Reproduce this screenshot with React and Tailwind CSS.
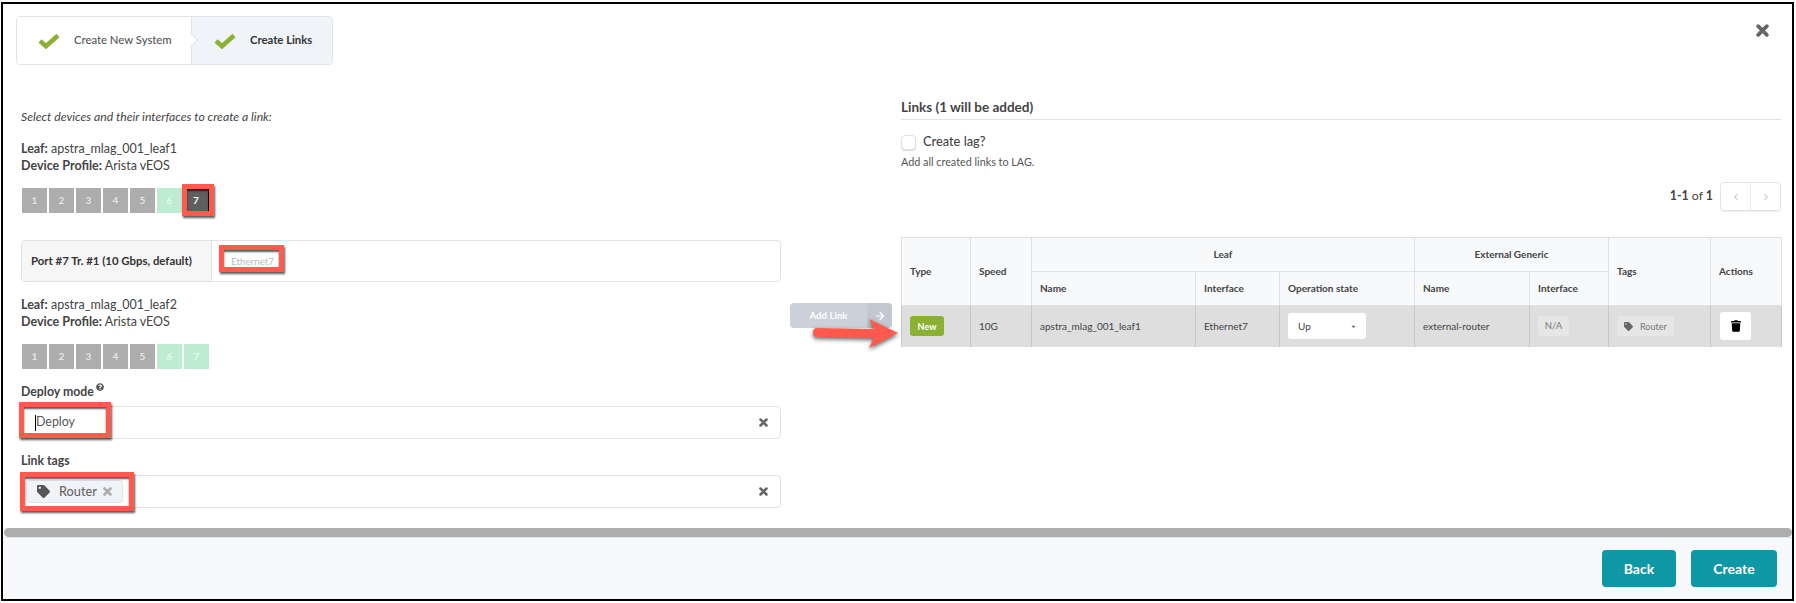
import React from "react";
import { FaTag, FaTrash, FaQuestionCircle, FaCaretDown, FaChevronLeft, FaChevronRight } from "react-icons/fa";
import { ArrowRight } from "lucide-react";

const Red = ({ className }) => (
  <span className={"absolute pointer-events-none border-[5px] border-[#ff5a4d] shadow-[1px_2px_2px_rgba(0,0,0,0.65),inset_0_2px_2px_rgba(0,0,0,0.65)] " + className} />
);

const Check = () => (
  <svg className="w-[22px] h-[16px] shrink-0" viewBox="0 0 22 16">
    <path d="M2 8 L8 13.2 L20 2.5" fill="none" stroke="#8ab133" strokeWidth="4.6" />
  </svg>
);

const Cross = ({ className }) => (
  <svg className={"shrink-0 " + className} viewBox="0 0 12 12">
    <path d="M2 2 L10 10 M10 2 L2 10" fill="none" stroke="currentColor" strokeWidth="3.4" strokeLinecap="round" />
  </svg>
);

const Ports = ({ selected }) => (
  <div className="flex gap-[2px] mt-[14px] ml-px">
    {[1, 2, 3, 4, 5, 6, 7].map((n) => {
      const isSel = n === selected;
      const bg = isSel ? "bg-[#5f5f5f] text-white border-r border-black" : n > 5 ? "bg-[#bdecd0] text-white/60" : "bg-[#adadad] text-white/70";
      return (
        <div key={n} className={"relative w-[25px] h-[25px] flex items-center justify-center text-[10px] font-bold " + bg}>
          {n}
          {isSel && <Red className="-left-[2px] -right-[6px] -top-[4px] -bottom-[3px]" />}
        </div>
      );
    })}
  </div>
);

const Device = ({ name, className }) => (
  <div className={"text-[12.5px] leading-[17px] text-[#444] " + className}>
    <div><b>Leaf:</b> {name}</div>
    <div><b>Device Profile:</b> Arista vEOS</div>
  </div>
);

const InputBox = ({ children, className }) => (
  <div className={"relative h-[33px] border border-[#e0e2ea] rounded-[4px] bg-white flex items-center pr-[12px] " + className}>
    {children}
    <Cross className="ml-auto w-[9px] h-[9px] text-[#666]" />
  </div>
);

const th = "border border-[#dfe1e6] bg-[#f8f9fb] px-[8px] text-[10px] font-bold text-[#444] text-left";
const thc = "border border-[#dfe1e6] bg-[#f8f9fb] px-[8px] text-[10px] font-bold text-[#444] text-center";
const td = "border-x border-t border-[#c6c6c6] px-[8px] text-[10px] text-[#444]";

export default function App() {
  return (
    <div className="w-[1796px] h-[603px] bg-white pt-[2px] pl-[1px] font-['Lato','Liberation_Sans',sans-serif]">
      <div className="w-[1793px] h-[599px] border-2 border-black flex flex-col overflow-hidden">
        <div className="h-[524px] flex flex-col">
          <div className="flex items-start pt-[12px] pl-[13px] pr-[23px]">
            <div className="flex w-[317px] h-[49px] border border-[#dfe3ea] rounded-[4px] overflow-hidden">
              <div className="relative w-[175px] flex items-center bg-white pl-[21px] border-r border-[#dfe3ea]">
                <Check />
                <span className="ml-[14px] text-[11.3px] font-medium text-[#555]">Create New System</span>
                <span className="absolute -right-[5px] top-[18px] w-[10px] h-[10px] rotate-45 bg-white border-t border-r border-[#dfe3ea]" />
              </div>
              <div className="flex-1 flex items-center bg-[#f0f3f8] pl-[22px]">
                <Check />
                <span className="ml-[14px] text-[11.3px] font-bold text-[#333]">Create Links</span>
              </div>
            </div>
            <Cross className="ml-auto mt-[8px] w-[13px] h-[13px] text-[#666]" />
          </div>

          <div className="flex items-start pl-[18px]">
            <div className="w-[760px]">
              <div className="mt-[42px] h-[20px] leading-[20px] text-[12.2px] italic text-[#444]">Select devices and their interfaces to create a link:</div>
              <Device name="apstra_mlag_001_leaf1" className="mt-[13px]" />
              <Ports selected={7} />
              <div className="mt-[27px] h-[42px] border border-[#e0e2ea] rounded-[4px] flex items-stretch">
                <div className="w-[190px] bg-[#f6f6f6] border-r border-[#e0e2ea] flex items-center pl-[9px] text-[11.4px] font-bold text-[#333] rounded-l-[4px]">Port #7 Tr. #1 (10 Gbps, default)</div>
                <div className="flex items-center pl-[19px]">
                  <span className="relative text-[9.8px] text-[#bbb]">
                    Ethernet7
                    <Red className="-left-[12px] -right-[10px] -top-[9px] -bottom-[4px]" />
                  </span>
                </div>
              </div>
              <Device name="apstra_mlag_001_leaf2" className="mt-[14px]" />
              <Ports />
              <div className="mt-[13px] h-[20px] leading-[20px] text-[12.3px] font-bold text-[#444] flex items-start">
                Deploy mode
                <FaQuestionCircle className="ml-[2px] mt-[1px] w-[8px] h-[8px] text-[#555]" />
              </div>
              <InputBox className="mt-[4px]">
                <span className="relative ml-[14px] text-[12.4px] text-[#555]">
                  <span className="absolute -left-px top-[2px] bottom-[1px] w-px bg-black" />
                  Deploy
                  <Red className="-left-[17px] -right-[36px] -top-[11px] -bottom-[6px]" />
                </span>
              </InputBox>
              <div className="mt-[12px] h-[20px] leading-[20px] text-[12.3px] font-bold text-[#444]">Link tags</div>
              <InputBox className="mt-[4px]">
                <span className="relative ml-[4px] w-[97px] h-[23px] border border-[#dfe3ea] bg-[#f0f3f8] rounded-[4px] flex items-center pl-[10px] text-[12.7px] font-medium text-[#666]">
                  <FaTag className="w-[13px] h-[13px] text-[#555]" />
                  <span className="ml-[9px]">Router</span>
                  <Cross className="ml-[6px] w-[9px] h-[9px] text-[#aaa]" />
                  <Red className="-left-[7px] -right-[12px] -top-[9px] -bottom-[9px]" />
                </span>
              </InputBox>
            </div>

            <div className="relative ml-[9px] mt-[238px] w-[102px] h-[25px] flex rounded-[4px]">
              <div className="w-[77px] bg-[#ccd1d9] rounded-l-[4px] flex items-center justify-center text-[9.7px] font-bold text-white">Add Link</div>
              <div className="flex-1 bg-[#c2c7d0] rounded-r-[4px] flex items-center justify-center text-white">
                <ArrowRight className="w-[12px] h-[12px]" strokeWidth={2.4} />
              </div>
              <svg className="absolute left-[20px] top-[14px] w-[92px] h-[34px] overflow-visible" viewBox="0 0 92 34">
                <path d="M59 2 L88 16 L59 31 L64 21 L7 20 Q3 20 3 15.5 Q3 11 7 11 L64 12 Z" fill="#ff5a4d" style={{ filter: "drop-shadow(0 2px 2px rgba(0,0,0,0.6))" }} />
              </svg>
            </div>

            <div className="ml-[9px] w-[880px]">
              <div className="mt-[32px] h-[20px] leading-[20px] text-[13.5px] font-bold text-[#444]">Links (1 will be added)</div>
              <div className="mt-[2px] border-b border-[#e0e2ea]" />
              <div className="mt-[14px] h-[16px] flex items-center">
                <span className="w-[15px] h-[15px] rounded-[4px] border border-[#dfe1e6] bg-white shadow-[0_1px_1px_rgba(0,0,0,0.15)]" />
                <span className="ml-[7px] text-[12.8px] font-medium text-[#444]">Create lag?</span>
              </div>
              <div className="mt-[4px] h-[16px] leading-[16px] text-[10.8px] text-[#555]">Add all created links to LAG.</div>
              <div className="mt-[12px] h-[29px] flex items-center justify-end">
                <span className="text-[12.3px] text-[#444]"><b>1-1</b> of <b>1</b></span>
                <div className="ml-[7px] w-[61px] h-[29px] flex border border-[#dfe3ea] rounded-[4px] shadow-[0_1px_1px_rgba(0,0,0,0.08)]">
                  <div className="flex-1 flex items-center justify-center border-r border-[#e8eaee]"><FaChevronLeft className="w-[6px] h-[8px] text-[#d0d0d0]" /></div>
                  <div className="flex-1 flex items-center justify-center"><FaChevronRight className="w-[6px] h-[8px] text-[#d0d0d0]" /></div>
                </div>
              </div>
              <table className="mt-[26px] w-[880px] table-fixed border-collapse">
                <colgroup>
                  <col className="w-[69px]" /><col className="w-[61px]" /><col className="w-[164px]" /><col className="w-[84px]" /><col className="w-[135px]" /><col className="w-[115px]" /><col className="w-[79px]" /><col className="w-[102px]" /><col className="w-[71px]" />
                </colgroup>
                <thead>
                  <tr className="h-[34px]">
                    <th rowSpan={2} className={th}>Type</th>
                    <th rowSpan={2} className={th}>Speed</th>
                    <th colSpan={3} className={thc}>Leaf</th>
                    <th colSpan={2} className={thc}>External Generic</th>
                    <th rowSpan={2} className={th}>Tags</th>
                    <th rowSpan={2} className={th}>Actions</th>
                  </tr>
                  <tr className="h-[34px]">
                    <th className={th}>Name</th>
                    <th className={th}>Interface</th>
                    <th className={th}>Operation state</th>
                    <th className={th}>Name</th>
                    <th className={th}>Interface</th>
                  </tr>
                </thead>
                <tbody>
                  <tr className="h-[41px] bg-[#dedede]">
                    <td className={td}>
                      <span className="flex items-center justify-center w-[34px] h-[20px] rounded-[3px] bg-[#8ab133] text-white text-[9px] font-bold">New</span>
                    </td>
                    <td className={td}>10G</td>
                    <td className={td}>apstra_mlag_001_leaf1</td>
                    <td className={td}>Ethernet7</td>
                    <td className={td}>
                      <span className="flex items-center w-[78px] h-[26px] rounded-[3px] bg-white pl-[10px] pr-[9px]">
                        Up
                        <FaCaretDown className="ml-auto w-[7px] h-[7px] text-[#666]" />
                      </span>
                    </td>
                    <td className={td}>external-router</td>
                    <td className={td}>
                      <span className="flex items-center justify-center w-[31px] h-[20px] rounded-[3px] bg-[#e6e6e6] text-[9.5px] text-[#777]">N/A</span>
                    </td>
                    <td className={td}>
                      <span className="flex items-center w-[57px] h-[20px] rounded-[3px] bg-[#e6e6e6] pl-[7px] text-[9px] text-[#777]">
                        <FaTag className="w-[9px] h-[9px] text-[#666]" />
                        <span className="ml-[7px]">Router</span>
                      </span>
                    </td>
                    <td className={td}>
                      <span className="flex items-center justify-center ml-[1px] w-[31px] h-[28px] rounded-[3px] bg-white">
                        <FaTrash className="w-[10px] h-[12px] text-black" />
                      </span>
                    </td>
                  </tr>
                </tbody>
              </table>
            </div>
          </div>
        </div>

        <div className="h-[9px] ml-px bg-[#adadad] rounded-full shrink-0" />
        <div className="flex-1 bg-[#f8f9fb] border-t border-[#e5e7ee] flex justify-end items-start gap-[15px] pt-[12px] pr-[15px]">
          <button className="w-[74px] h-[37px] rounded-[4px] bg-[#0e97a4] text-white text-[14px] font-bold">Back</button>
          <button className="w-[86px] h-[37px] rounded-[4px] bg-[#0e97a4] text-white text-[14px] font-bold">Create</button>
        </div>
      </div>
    </div>
  );
}
